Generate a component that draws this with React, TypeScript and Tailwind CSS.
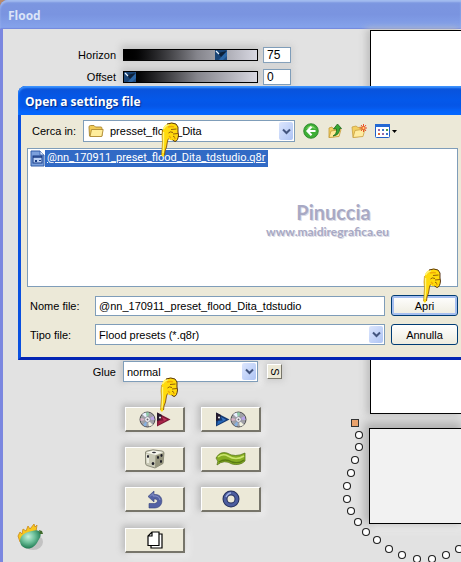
import { useState } from 'react';
import type { ReactNode } from 'react';

const handles = [
  [19, 20], [19, 32], [15, 45], [11, 58], [7, 71], [7, 84], [11, 96], [18, 107],
  [26, 117], [37, 125], [49, 134], [62, 140], [77, 144], [92, 144], [106, 140], [119, 134],
];

function Hand({ className }: { className: string }) {
  return (
    <svg className={`absolute pointer-events-none z-10 ${className}`} width="20" height="36" viewBox="0 0 20 36" aria-hidden="true">
      <path
        d="M3 7 Q4 3 8 1.500 Q12 0 16 2 L18 5 V10 L18.500 13 Q18 19 15 19.500 L12.500 18 Q10 19 8.500 16.500 L7.500 19 L6.500 25 L5 29 L4.500 33 Q3 36 1.500 33.500 L2 27 L2.500 20 L2 14 Z"
        fill="#ffda0c"
      />
      <path d="M3.500 7 Q5 3.500 9 2.500 M3.500 10 L3.500 20 L3 31" stroke="#fff47a" strokeWidth="1.400" fill="none" />
      <path d="M8 5 Q12 4 14 5 M9 14 L11 16 M14 17 L16 16" stroke="#f0a708" strokeWidth="1.300" fill="none" />
      <path d="M7 2 Q12 0 16 2 L18 5 V10 L18.500 13 Q18 19 15 19.500 L12.500 18" stroke="#4a2508" strokeWidth="0.900" fill="none" />
      <path d="M11 7.500 L16.500 7 M8.500 11 Q10 9 13 10.500 M13 12 L18 11.500 M13 14 L15 15.500 M8.500 16.500 L7.500 19 L6.500 25 L5 29 L4.500 33" stroke="#86500a" strokeWidth="0.900" fill="none" />
      <path d="M2.500 8 L2 14 L2.500 20 L2 27 L1.500 33" stroke="#b27a0a" strokeWidth="0.600" fill="none" />
    </svg>
  );
}

function Chevron() {
  return (
    <span className="absolute right-[2px] top-[2px] bottom-[2px] w-[14px] flex items-center justify-center pointer-events-none rounded-xs bg-linear-to-br from-[#dce6fd] to-[#aec4f4]">
      <svg width="9" height="7" viewBox="0 0 9 7" aria-hidden="true">
        <path d="M1 1.500 L4.500 5 L8 1.500" stroke="#43557f" strokeWidth="2" fill="none" />
      </svg>
    </span>
  );
}

function SliderRow({ id, label, initial }: { id: string; label: string; initial: number }) {
  const [value, setValue] = useState(initial);
  return (
    <div className="flex items-center h-4">
      <label htmlFor={id} className="w-[113px] text-right">{label}</label>
      <div className="relative ml-[7px] w-[135px] h-3 border border-black bg-linear-to-r from-black via-[#85858c] via-55% to-[#d8d8e2] shadow-[0_-2px_7px_2px_#c4c4c4]">
        <input
          id={id}
          type="range"
          min="0"
          max="100"
          value={value}
          onChange={(e) => setValue(Number(e.target.value))}
          className="absolute inset-0 w-full h-full m-0 opacity-0 cursor-pointer"
        />
        <svg className="absolute top-0 pointer-events-none" style={{ left: `calc((100% - 12px) * ${value / 100})` }} width="12" height="10" viewBox="0 0 12 10" aria-hidden="true">
          <rect width="12" height="10" fill="#1f4f86" />
          <path d="M0 0 H12 V2 L7 6 L3 10 H0 Z" fill="#1a4475" />
          <path d="M12 0 V6 L8 10 H4 Z" fill="#2b66a6" />
          <path d="M3 3 L12 1 L6 7 Z" fill="#0d2038" />
          <path d="M1 1 L4 4" stroke="#e6f2ff" strokeWidth="1.200" />
        </svg>
      </div>
      <input
        aria-label={`${label} value`}
        type="text"
        value={value}
        onChange={(e) => setValue(Number(e.target.value) || 0)}
        className="ml-[5px] w-7 h-4 pl-[3px] bg-white border border-[#7f9db9] text-xs leading-3 shadow-[0_0_6px_2px_#d0d0d0] outline-none"
      />
    </div>
  );
}

function ToolButton({ label, children }: { label: string; children: ReactNode }) {
  return (
    <button
      type="button"
      aria-label={label}
      className="w-[60px] h-[25px] flex items-center justify-center bg-[#ece9d8] border border-t-white border-l-white border-r-2 border-b-2 border-r-[#77756a] border-b-[#77756a] shadow-[-2px_-2px_6px_1px_#bdbdbd,3px_3px_6px_#f4f4f4]"
    >
      {children}
    </button>
  );
}

function Disc() {
  return (
    <svg width="17" height="17" viewBox="0 0 17 17" aria-hidden="true">
      <circle cx="8.500" cy="8.500" r="7.500" fill="#a0a0a6" stroke="#4c4c50" />
      <path d="M8.500 8.500 L3 3 L7 1.500 Z" fill="#e9f0ff" />
      <path d="M8.500 8.500 L7 1.500 L10 1.500 Z" fill="#8fd0ac" />
      <path d="M8.500 8.500 L14.500 5 L15.500 9 Z" fill="#b9a3ea" />
      <path d="M8.500 8.500 L14 14 L10 15.500 Z" fill="#f2f2e0" />
      <path d="M8.500 8.500 L7 15.500 L4 14 Z" fill="#86b2e2" />
      <path d="M8.500 8.500 L1.500 10 L1.500 7 Z" fill="#d9b0c5" />
      <circle cx="8.500" cy="8.500" r="2.800" fill="#f2f2f6" stroke="#7d7d8a" strokeWidth="0.800" />
      <circle cx="8.500" cy="8.500" r="1" fill="#66666f" />
    </svg>
  );
}

function Triangle({ dark, mid, light }: { dark: string; mid: string; light: string }) {
  return (
    <svg width="15" height="15" viewBox="0 0 15 15" aria-hidden="true">
      <path d="M1 0.500 L14.500 7.500 L1 14.500 Z" fill={dark} />
      <path d="M1 0.500 L6 3 L4 8 L1 9 Z" fill="#241a2c" />
      <path d="M3 9 L11 8 L2 13 Z" fill={mid} />
      <path d="M6 5 L11 7.500 L8 9 Z" fill={light} />
      <circle cx="4" cy="5.500" r="1" fill="#f4f4f4" />
    </svg>
  );
}

function Folder() {
  return (
    <svg width="16" height="14" viewBox="0 0 16 14" aria-hidden="true">
      <path d="M1 3 Q1 1.500 2.500 1.500 H6 L7.500 3 H13 Q14 3 14 4.500 V12 H1.500 Z" fill="#f1cb58" stroke="#a9842c" strokeWidth="0.900" />
      <path d="M2 12.500 L3.500 5.500 H15.200 L13.800 12.500 Z" fill="#ffed9b" stroke="#b08b33" strokeWidth="0.900" />
    </svg>
  );
}

function Toolbar() {
  return (
    <div className="ml-2 flex items-center gap-2">
      <button type="button" aria-label="Indietro">
        <svg width="16" height="16" viewBox="0 0 16 16">
          <circle cx="8" cy="8" r="7.300" fill="#3fae36" stroke="#238023" strokeWidth="0.800" />
          <path d="M3 6 Q8 -1 13 6 Q8 4 3 6Z" fill="#86d96d" />
          <path d="M8.500 3.800 L4.500 8 L8.500 12.200 M5 8 H12.500" stroke="white" strokeWidth="2.200" fill="none" />
        </svg>
      </button>
      <button type="button" aria-label="Cartella superiore">
        <svg width="16" height="16" viewBox="0 0 16 16">
          <path d="M2 5 L5 4 L6 5.500 L12 5 V13 L2 14.500 Z" fill="#f2cf61" stroke="#c49a37" strokeWidth="0.800" />
          <path d="M2 14.500 L4 8 L14 6.500 L12 13.500 Z" fill="#ffe998" stroke="#c49a37" strokeWidth="0.800" />
          <path d="M6 13 Q10 11 9.500 6 H6.500 L10.500 1 L14.500 5.500 H12.500 Q13 12 6 13 Z" fill="#37a834" stroke="#1e671c" strokeWidth="0.800" />
        </svg>
      </button>
      <button type="button" aria-label="Nuova cartella">
        <svg width="16" height="16" viewBox="0 0 16 16">
          <path d="M1 4 L5 3 L7 4.500 L11 4 V13 L2 14.500 Z" fill="#f2cf61" stroke="#c9a143" strokeWidth="0.800" />
          <path d="M2 14.500 L4 7.500 L14 6 L12 13.500 Z" fill="#ffeca0" stroke="#c9a143" strokeWidth="0.800" />
          <path d="M12.500 1 V9 M8.500 5 H16 M10 2 L15 8 M15 2 L10 8" stroke="#e8502a" strokeWidth="1" />
          <circle cx="12.500" cy="5" r="1.500" fill="#ffd57a" stroke="#e8502a" strokeWidth="0.700" />
        </svg>
      </button>
      <button type="button" aria-label="Visualizza">
        <svg width="23" height="16" viewBox="0 0 23 16">
          <rect x="0.500" y="1.500" width="14" height="13" rx="1" fill="white" stroke="#1f5fc9" />
          <rect x="0" y="1" width="15" height="3" fill="#2469d4" />
          <path d="M3 6 h2 v2 h-2z M7 10 h2 v2 h-2z" fill="#9a6aa8" />
          <path d="M7 6 h2 v2 h-2z M11 10 h2 v2 h-2z" fill="#3c78c8" />
          <path d="M11 6 h2 v2 h-2z" fill="#4f9a45" />
          <path d="M3 10 h2 v2 h-2z" fill="#dd6a36" />
          <path d="M17 7 H22 L19.500 10 Z" fill="black" />
        </svg>
      </button>
    </div>
  );
}

function OpenDialog() {
  const [fileName, setFileName] = useState('@nn_170911_preset_flood_Dita_tdstudio');

  return (
    <section
      role="dialog"
      aria-labelledby="dialog-title"
      className="absolute top-[86px] left-[18px] -right-[6px] rounded-t-lg border-x-3 border-b-3 border-x-[#0a50e0] border-b-[#0526b4] bg-[#ece9d8]"
    >
      <header className="-mx-[3px] h-[29px] pl-[7px] pt-[2px] flex items-center rounded-t-lg bg-linear-to-b from-[#0a52d8] via-[#0458ea] to-[#0a50e0] shadow-[inset_0_2px_2px_#3f95ff,inset_0_-6px_5px_#0468ff]">
        <h2 id="dialog-title" className="font-['Open_Sans',sans-serif] font-bold text-xs text-white [text-shadow:1px_1px_1px_#062a85]">
          Open a settings file
        </h2>
      </header>

      <form className="pt-[5px] pl-[6px] pr-[6px] pb-[12px]" onSubmit={(e) => e.preventDefault()}>
        <div className="flex items-center h-[22px]">
          <label htmlFor="folder" className="w-[56px] pl-[5px]">Cerca in:</label>
          <div className="relative w-[212px] h-[22px]">
            <select id="folder" className="appearance-none block w-full h-full pl-[26px] bg-white border border-[#7f9db9] outline-none">
              <option>presset_flood_Dita</option>
            </select>
            <span className="absolute left-[5px] top-1 pointer-events-none"><Folder /></span>
            <Chevron />
            <Hand className="left-[77px] top-[2px]" />
          </div>
          <Toolbar />
        </div>

        <div className="relative mt-[6px] h-[139px] border border-[#7f9db9] bg-white">
          <div className="flex items-center pt-[1px] pl-[2px]">
            <svg width="15" height="17" viewBox="0 0 15 17" aria-hidden="true">
              <path d="M1 1 H10 L14 5 V16 H1 Z" fill="#7ba0dc" stroke="#315ca8" />
              <path d="M10 1 V5 H14" fill="#dde8fb" stroke="#315ca8" strokeWidth="0.800" />
              <rect x="3" y="6" width="9" height="7" fill="#b9d0f5" stroke="#173b84" />
              <path d="M3 7 H12" stroke="#173b84" strokeWidth="1.500" />
              <path d="M5 10 h2 v2 h-2z M9 10 h2 v1 h-2z" fill="#173b84" />
            </svg>
            <a href="#file" className="h-[17px] px-[2px] bg-[#316ac5] text-white underline font-['Roboto',sans-serif] text-[11px] leading-4">
              @nn_170911_preset_flood_Dita_tdstudio.q8r
            </a>
          </div>
          <div className="absolute left-[238px] top-[51px] text-center text-[#a8a9c4] font-['Lato',sans-serif] [text-shadow:1px_1px_0_#dcdce6]">
            <p className="pl-3 text-xl leading-6 font-bold">Pinuccia</p>
            <p className="text-xs leading-4 font-bold">www.maidiregrafica.eu</p>
          </div>
        </div>

        <div className="mt-2 flex items-center h-[21px]">
          <label htmlFor="file-name" className="w-[68px] pl-[3px]">Nome file:</label>
          <input
            id="file-name"
            type="text"
            value={fileName}
            onChange={(e) => setFileName(e.target.value)}
            className="w-[290px] h-5 pl-[3px] bg-white border border-[#7f9db9] outline-none"
          />
          <button type="submit" className="relative ml-[6px] flex-1 h-[21px] rounded-[3px] border border-[#003c74] bg-linear-to-b from-white to-[#eeecdf] shadow-[inset_0_0_0_2px_#a6bff0]">
            Apri
            <Hand className="left-[30px] -top-[28px]" />
          </button>
        </div>

        <div className="mt-2 flex items-center h-[21px]">
          <label htmlFor="file-type" className="w-[68px] pl-[3px]">Tipo file:</label>
          <div className="relative w-[290px] h-[21px]">
            <select id="file-type" className="appearance-none block w-full h-full pl-[3px] bg-white border border-[#7f9db9] outline-none">
              <option>Flood presets (*.q8r)</option>
            </select>
            <Chevron />
          </div>
          <button type="button" className="ml-[6px] flex-1 h-[21px] rounded-[3px] border border-[#003c74] bg-linear-to-b from-white to-[#eeecdf]">
            Annulla
          </button>
        </div>
      </form>
    </section>
  );
}

export default function App() {
  return (
    <div className="relative min-h-screen overflow-hidden bg-[#b98a6a] font-['Liberation_Sans',Arial,sans-serif] text-[11px] leading-4 text-black">
      <main className="min-h-screen flex flex-col rounded-tl-lg border-l-3 border-[#7b87e0] bg-[#e2e2e2]">
        <header className="-ml-[3px] h-[29px] pl-2 pt-[2px] flex items-center rounded-tl-lg bg-linear-to-b from-[#7c96e0] via-[#7a94e0] to-[#86a4ec] shadow-[inset_0_2px_2px_#a4bdf0,inset_0_-1px_1px_#7489de]">
          <h1 className="font-['Open_Sans',sans-serif] font-bold text-xs text-[#dbe4f8]">Flood</h1>
        </header>

        <div className="flex flex-1">
          <section className="w-[367px] shrink-0 pt-[18px] pb-[9px]">
            <div className="flex flex-col gap-[6px]">
              <SliderRow id="horizon" label="Horizon" initial={75} />
              <SliderRow id="offset" label="Offset" initial={0} />
            </div>

            <div className="mt-[276px] flex items-center h-[21px]">
              <label htmlFor="glue" className="w-[113px] text-right">Glue</label>
              <div className="relative ml-[7px] w-[135px] h-[21px] shadow-[-2px_0_6px_1px_#c8c8c8,3px_3px_6px_#f4f4f4]">
                <select id="glue" className="appearance-none block w-full h-full pl-[3px] bg-white border border-[#7f9db9] outline-none">
                  <option>normal</option>
                </select>
                <Chevron />
              </div>
              <button type="button" className="ml-[9px] w-[15px] h-[15px] flex items-center justify-center bg-[#ece9d8] border border-t-white border-l-white border-r-[#77756a] border-b-[#77756a] shadow-[0_0_6px_2px_#cccccc]">
                <span className="rotate-90">S</span>
              </button>
            </div>

            <div className="relative mt-[25px] ml-[122px] grid grid-cols-[60px_60px] gap-x-4 gap-y-[15px]">
              <Hand className="left-[34px] -top-[30px]" />
              <ToolButton label="Load preset">
                <Disc />
                <Triangle dark="#7d1a36" mid="#a82549" light="#c4345c" />
              </ToolButton>
              <ToolButton label="Save preset">
                <Triangle dark="#163a72" mid="#2466b8" light="#3676c6" />
                <Disc />
              </ToolButton>
              <ToolButton label="Random">
                <svg width="21" height="20" viewBox="0 0 21 20" aria-hidden="true">
                  <path d="M1.500 4 Q1 2.500 3 2 L9 0.800 L18 2 Q20 2.500 20 4 L19 14.500 L11 19 L3 16.500 Q1.500 16 1.500 14 Z" fill="#c9c9b6" stroke="#6c6c5c" strokeWidth="0.700" />
                  <path d="M11.500 6.500 L20 4 L19 14.500 L11 19 Z" fill="#96957e" />
                  <path d="M2 3.500 L9 1.500 L19 3 L11.500 6 Z" fill="#f6f6ec" />
                  <path d="M2 5 L5 6 V14 L3 14 Z" fill="#ececdf" />
                  <ellipse cx="10" cy="3.500" rx="2" ry="0.800" fill="#33333a" />
                  <ellipse cx="4" cy="7.500" rx="1" ry="1.400" fill="#1b1b24" />
                  <ellipse cx="9" cy="14.500" rx="1.300" ry="1.600" fill="#1b1b24" />
                  <ellipse cx="14" cy="8.500" rx="1" ry="1.400" fill="#1b1b24" />
                  <ellipse cx="17.500" cy="6.500" rx="1" ry="1.400" fill="#1b1b24" />
                  <ellipse cx="17" cy="12.500" rx="1" ry="1.400" fill="#1b1b24" />
                </svg>
              </ToolButton>
              <ToolButton label="Wave">
                <svg width="32" height="18" viewBox="0 0 32 18" aria-hidden="true">
                  <path d="M1 8 Q5 1 12 3 Q20 8 30 3 V11 Q25 16 17 14 Q9 9 2 15 Q4 11 1 8 Z" fill="#86ad22" stroke="#4f6d12" strokeWidth="0.700" />
                  <path d="M3 7 Q8 3 13 6 Q21 11 29 6" stroke="#cbe56d" strokeWidth="1.600" fill="none" />
                  <path d="M4 12 Q10 8 17 12 Q24 14 29 10" stroke="#587a12" strokeWidth="1.400" fill="none" />
                </svg>
              </ToolButton>
              <ToolButton label="Undo">
                <svg width="16" height="19" viewBox="0 0 16 19" aria-hidden="true">
                  <path d="M1 6.500 L7 1 V4.500 H9 C17 5 17 17.500 8 18 H2 V13.500 H7.500 C11.500 13 11 9 8 9 H7 V12 Z" fill="#5361a4" stroke="#38457c" strokeWidth="0.600" />
                  <path d="M3 6.500 L6 3.500 V6 H9 Q12.500 6.500 13 10" stroke="#8793c8" strokeWidth="1" fill="none" />
                </svg>
              </ToolButton>
              <ToolButton label="Reset">
                <svg width="18" height="18" viewBox="0 0 18 18" aria-hidden="true">
                  <circle cx="9" cy="9" r="6" fill="none" stroke="#26315c" strokeWidth="5" />
                  <circle cx="9" cy="9" r="6" fill="none" stroke="#4c5d9f" strokeWidth="3" />
                  <path d="M4 7 Q6 3 9 3" stroke="#9fb0e4" strokeWidth="1.500" fill="none" />
                </svg>
              </ToolButton>
              <div className="pt-[1px]">
                <ToolButton label="Copy">
                  <svg width="16" height="18" viewBox="0 0 16 18" aria-hidden="true">
                    <path d="M4 3 H15 V17 H4 Z" fill="white" stroke="black" strokeWidth="1.200" />
                    <path d="M5 1 H12 V14.500 H1 V5 Z M5 1 V5 H1" fill="white" stroke="black" strokeWidth="1.200" />
                  </svg>
                </ToolButton>
              </div>
            </div>
          </section>

          <section className="relative flex-1 pt-[1px]">
            <div className="h-96 border border-r-0 border-black bg-white shadow-[-3px_0_7px_1px_#c0c0c0]" />
            <div className="relative mt-[14px] -ml-[1px] h-24 border border-r-0 border-black bg-[#f2f2f2] shadow-[-2px_-3px_9px_3px_#b0b0b0,3px_5px_8px_#f6f6f6]" />
            <svg className="absolute -left-[30px] top-[386px]" width="121" height="150" viewBox="0 0 121 150" aria-hidden="true">
              <rect x="11.500" y="4.500" width="7" height="7" fill="#eaa26c" stroke="#333" />
              {handles.map(([cx, cy]) => (
                <circle key={`${cx}-${cy}`} cx={cx} cy={cy} r="3.500" fill="white" stroke="#222" strokeWidth="1.100" />
              ))}
            </svg>
          </section>
        </div>
      </main>

      <svg className="absolute left-4 bottom-2" width="30" height="32" viewBox="0 0 30 32" aria-hidden="true">
        <defs>
          <radialGradient id="pear" cx="0.4" cy="0.35" r="0.65">
            <stop offset="0" stopColor="#c6f0dc" />
            <stop offset="0.500" stopColor="#6cc09a" />
            <stop offset="1" stopColor="#1d7850" />
          </radialGradient>
        </defs>
        <ellipse cx="17" cy="20" rx="10" ry="8" fill="#c2c2c2" />
        <path d="M4 20 L2 14 L4 10 L6 12 L7 7 L10 9 L12 4 L14 7 L18 2 L19 5 L21 3 L20 10 L10 16 Z" fill="#f8c61e" stroke="#c98a1b" strokeWidth="0.800" />
        <path d="M4 19 C4 13 10 10 16 9 Q22 7 24 10 Q26 13 22 19 C19 25 14 28 9 26 Q4 24 4 19 Z" fill="url(#pear)" />
        <path d="M23 8 L26 9 L27 12 L24 12 Z" fill="#3f6a2c" />
      </svg>

      <OpenDialog />
    </div>
  );
}
